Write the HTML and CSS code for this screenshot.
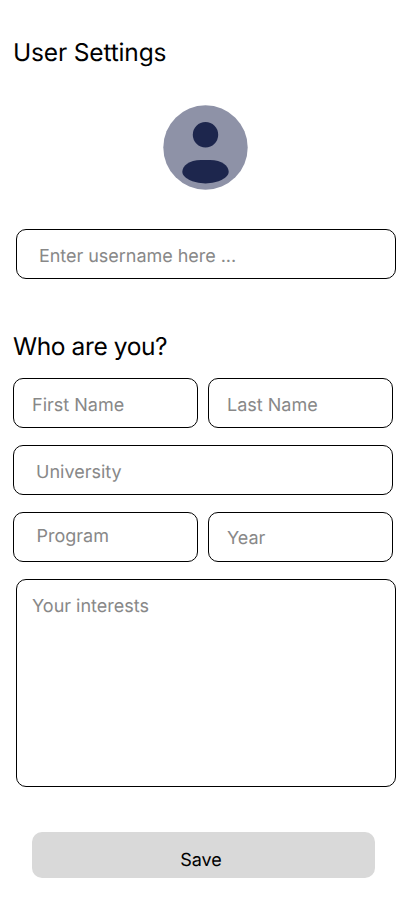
FILE: index.html
```
<!DOCTYPE html>
<html lang="en">
<head>
<meta charset="utf-8">
<meta name="viewport" content="width=device-width, initial-scale=1">
<title>User Settings</title>
<link rel="stylesheet" href="styles.css">
</head>
<body>
<main class="settings">
  <h1 class="title">User Settings</h1>
  <svg class="avatar" viewBox="0 0 85 85" aria-hidden="true">
    <circle cx="42.5" cy="42.5" r="42.2" fill="#8e92a7"/>
    <circle cx="42.5" cy="29.8" r="12.7" fill="#1d264d"/>
    <path d="M19.3 66.8C19.3 61 26 55 38 55H47C59 55 65.7 61 65.7 66.8C65.7 72.5 55.5 78.4 42.5 78.4S19.3 72.5 19.3 66.8Z" fill="#1d264d"/>
  </svg>
  <div class="field username">Enter username here ...</div>
  <h2 class="title who">Who are you?</h2>
  <div class="grid">
    <div class="field">First Name</div>
    <div class="field">Last Name</div>
    <div class="field university">University</div>
    <div class="field program">Program</div>
    <div class="field year">Year</div>
  </div>
  <div class="field interests">Your interests</div>
  <button class="save" type="button">Save</button>
</main>
</body>
</html>
```

FILE: styles.css
```
* { box-sizing: border-box; }
body { margin: 0; background: #fff; color: #000; font-family: Inter, sans-serif; text-rendering: geometricPrecision; }
.settings { height: 917px; padding: 37px 16px 0 13px; display: flex; flex-direction: column; }
.title { margin: 0; font-size: 24.5px; line-height: 30px; font-weight: 400; letter-spacing: -0.16px; }
.avatar { width: 85px; height: 85px; margin: 38px 0 0 150px; flex: none; }
.field { height: 50px; padding: 1px 18px 0; border: 1px solid #000; border-radius: 10px; color: #888; font-size: 18px; font-weight: 400; line-height: 52px; white-space: nowrap; }
.username { width: 380px; margin: 39px 0 0 3px; padding-left: 22px; letter-spacing: -0.04px; }
.who { margin-top: 52px; letter-spacing: -0.4px; }
.grid { display: grid; grid-template-columns: 185px 185px; gap: 17px 10px; margin-top: 17px; }
.university { grid-column: 1 / 3; width: 380px; padding-left: 22px; }
.program { padding-left: 22.5px; line-height: 46px; }
.year { line-height: 50px; }
.interests { width: 380px; height: 208px; margin: 17px 0 0 3px; padding-left: 15px; }
.save { width: 343px; height: 46px; margin: 45px 0 0 19px; padding: 11px 5px 0 0; border: 0; border-radius: 10px; background: #d9d9d9; color: #000; font: 18px/22px Inter, sans-serif; text-rendering: geometricPrecision; }
```
